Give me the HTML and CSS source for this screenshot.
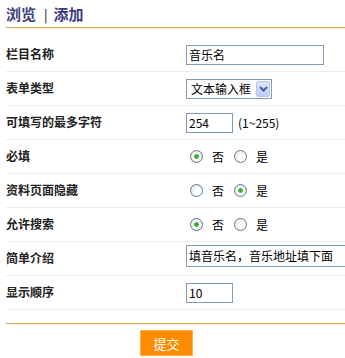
FILE: index.html
```html
<!DOCTYPE html>
<html lang="zh-CN">
<head>
    <meta charset="UTF-8">
    <meta name="viewport" content="width=device-width, initial-scale=1.0">
    <title>添加栏目</title>
    <link rel="stylesheet" href="styles.css">
</head>
<body>
    <div class="wrap">
        <div class="nav">
            <a href="#" class="nav-link">浏览</a><span class="sep">|</span><a href="#" class="nav-link">添加</a>
        </div>

        <form class="form">
            <div class="row">
                <label class="label">栏目名称</label>
                <div class="field"><input type="text" class="text" value="音乐名"></div>
            </div>
            <div class="row">
                <label class="label">表单类型</label>
                <div class="field">
                    <span class="select-box">
                        <select class="select"><option>文本输入框</option></select>
                        <span class="select-arrow">
                            <svg width="9" height="6" viewBox="0 0 9 6"><path d="M1 1 L4.5 4.5 L8 1" fill="none" stroke="#4d6185" stroke-width="2"/></svg>
                        </span>
                    </span>
                </div>
            </div>
            <div class="row">
                <label class="label">可填写的最多字符</label>
                <div class="field"><input type="text" class="text short" value="254"> <span class="hint">(1~255)</span></div>
            </div>
            <div class="row">
                <label class="label">必填</label>
                <div class="field">
                    <input type="radio" class="radio" name="must" checked><span class="opt">否</span>
                    <input type="radio" class="radio" name="must"><span class="opt">是</span>
                </div>
            </div>
            <div class="row">
                <label class="label">资料页面隐藏</label>
                <div class="field">
                    <input type="radio" class="radio" name="hide"><span class="opt">否</span>
                    <input type="radio" class="radio" name="hide" checked><span class="opt">是</span>
                </div>
            </div>
            <div class="row">
                <label class="label">允许搜索</label>
                <div class="field">
                    <input type="radio" class="radio" name="search" checked><span class="opt">否</span>
                    <input type="radio" class="radio" name="search"><span class="opt">是</span>
                </div>
            </div>
            <div class="row">
                <label class="label">简单介绍</label>
                <div class="field"><input type="text" class="text wide" value="填音乐名，音乐地址填下面"></div>
            </div>
            <div class="row">
                <label class="label">显示顺序</label>
                <div class="field"><input type="text" class="text short" value="10"></div>
            </div>

            <div class="actions">
                <button type="button" class="submit">提交</button>
            </div>
        </form>
    </div>
</body>
</html>
```

FILE: styles.css
```css
html, body { margin: 0; overflow: hidden; }
body { font-family: "Noto Sans CJK SC", "DejaVu Sans", sans-serif; font-size: 12px; color: #000; background: #fff; }
.wrap { padding-left: 6px; }

/* 顶部导航 */
.nav { padding-top: 4px; padding-bottom: 2px; line-height: 20px; font-size: 15px; border-bottom: 1px solid #dca24a; }
.nav-link { color: #3d3d7d; font-weight: bold; text-decoration: none; }
.sep { color: #000; font-size: 13px; padding: 0 6px 0 8px; }

/* 表单行 */
.form { margin-top: 10px; }
.row { display: flex; align-items: center; height: 33px; border-bottom: 1px solid #ececec; white-space: nowrap; overflow: hidden; }
.label { width: 180px; flex-shrink: 0; font-weight: bold; color: #222; line-height: 16px; margin-top: -2px; }
.field { display: flex; align-items: center; line-height: 16px; min-width: 0; }

.text { box-sizing: border-box; height: 20px; width: 138px; border: 1px solid #7f9db9; padding: 0 2px; font-family: inherit; font-size: 12px; color: #000; background: #fff; outline: none; }
.text.short { width: 47px; }
.text.wide { width: 240px; height: 22px; margin-top: -6px; flex-shrink: 0; }
.hint { margin-left: 5px; }

.select-box { position: relative; display: inline-block; width: 86px; height: 20px; }
.select { box-sizing: border-box; width: 86px; height: 20px; border: 1px solid #7f9db9; padding: 0 0 0 4px; font-family: inherit; font-size: 12px; background: #fff; appearance: none; -webkit-appearance: none; border-radius: 0; outline: none; }
.select-arrow { position: absolute; right: 2px; top: 2px; width: 14px; height: 16px; box-sizing: border-box; border: 1px solid #b7c9f3; border-radius: 2px; background: linear-gradient(#dbe5fd, #bccdf8); display: flex; align-items: center; justify-content: center; }

.radio { appearance: none; -webkit-appearance: none; box-sizing: border-box; width: 13px; height: 13px; margin: 0 9px 0 4px; border: 1px solid #5a7895; border-radius: 50%; background: radial-gradient(circle at 65% 65%, #fff 30%, #dcdcd6 100%); }
.radio + .opt + .radio { margin-left: 10px; }
.radio:checked { background: radial-gradient(circle, #2ea82e 0, #3cbf3c 2px, #fff 2.8px, #fff 30%, #dcdcd6 100%); }
.opt { color: #000; }

/* 提交 */
.actions { margin-top: 13px; border-top: 1px solid #dca24a; padding: 6px 0 0 134px; }
.submit { width: 53px; height: 26px; border: 1px solid #ffb347; background: #ff8b00; color: #fff; font-family: inherit; font-size: 13px; cursor: pointer; padding: 0; }
.submit:hover { background: #f07f00; }
```
